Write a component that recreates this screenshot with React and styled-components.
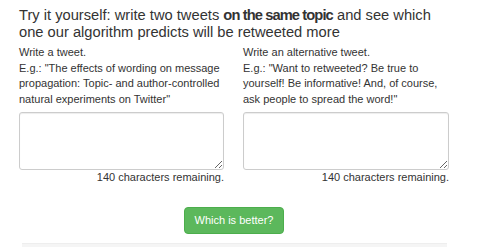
import React from 'react'
import styled, { createGlobalStyle } from 'styled-components'

const GlobalStyle = createGlobalStyle`
    body {
        margin: 0;
        background: #fff;
        color: #333;
        font-family: "Liberation Sans", Arial, sans-serif;
    }
`

const Page = styled.div`
    width: 430px;
    padding: 7px 0 0 19px;
`

const Heading = styled.h3`
    margin: 0 -4px 0 0;
    font-size: 14.7px;
    line-height: 16.5px;
    font-weight: normal;
    color: #333;

    b {
        font-weight: bold;
        letter-spacing: -0.9px;
    }
`

const Row = styled.div`
    display: grid;
    grid-template-columns: 205px 206px;
    column-gap: 19px;
    margin-top: 5px;
`

const Column = styled.div`
    display: flex;
    flex-direction: column;
`

const Label = styled.label`
    font-size: 11px;
    line-height: 15.6px;
    min-height: 62px;
`

const TweetBox = styled.textarea`
    box-sizing: border-box;
    width: 100%;
    height: 58px;
    margin: 5px 0 0 0;
    padding: 4px 6px;
    border: 1px solid #ccc;
    border-radius: 3px;
    box-shadow: inset 0 1px 1px rgba(0, 0, 0, 0.075);
    font-family: inherit;
    font-size: 11px;
    color: #555;
    resize: vertical;
    display: block;
`

const Counter = styled.div`
    text-align: right;
    font-size: 11px;
    line-height: 15.6px;
`

const Actions = styled.div`
    display: flex;
    justify-content: center;
    margin-top: 21px;
`

const Button = styled.button`
    height: 27px;
    padding: 0 10px;
    background: #5cb85c;
    border: 1px solid #4cae4c;
    border-radius: 4px;
    color: #fff;
    font-family: inherit;
    font-size: 11px;
    cursor: pointer;
`

const Well = styled.div`
    margin: 9px 2px 0 3px;
    height: 3px;
    background: #f5f5f5;
    border-top: 1px solid #eee;
`

const TweetColumn = ({ label, example }) => (
    <Column>
        <Label>
            {label}<br />
            E.g.: {example}
        </Label>
        <TweetBox />
        <Counter>140 characters remaining.</Counter>
    </Column>
)

export default function App() {
    return <>
        <GlobalStyle />
        <Page>
            <Heading>Try it yourself: write two tweets <b>on the same topic</b> and see which one our algorithm predicts will be retweeted more</Heading>
            <Row>
                <TweetColumn
                    label="Write a tweet."
                    example={'"The effects of wording on message propagation: Topic- and author-controlled natural experiments on Twitter"'}
                />
                <TweetColumn
                    label="Write an alternative tweet."
                    example={'"Want to retweeted? Be true to yourself! Be informative! And, of course, ask people to spread the word!"'}
                />
            </Row>
            <Actions>
                <Button>Which is better?</Button>
            </Actions>
            <Well />
        </Page>
    </>
}
